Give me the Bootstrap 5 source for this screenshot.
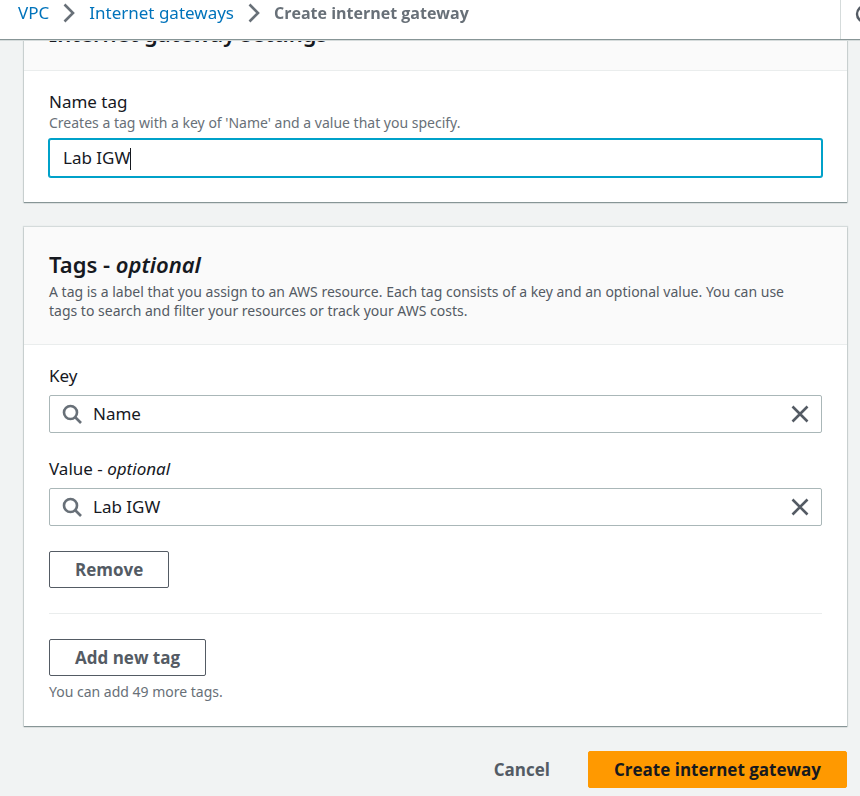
<!DOCTYPE html>
<html lang="en">
<head>
<meta charset="utf-8">
<meta name="viewport" content="width=device-width, initial-scale=1">
<title>Create internet gateway</title>
<link href="https://cdn.jsdelivr.net/npm/bootstrap@5.3.0/dist/css/bootstrap.min.css" rel="stylesheet">
<style>
  body { background: #f1f3f3; color: #16191f; font: 17px/22px "Noto Sans", "Open Sans", sans-serif; }
  a { color: #0073bb; }
  .topbar { height: 40px; background: #fff; border-bottom: 1px solid #879596; box-shadow: 0 1px 0 #d5dbdb; overflow: hidden; }
  .crumbs { padding: 0 0 13px 18px; gap: 13px; }
  .crumbs svg { display: block; }
  .crumb-now, .btn, h2 { font-family: "Open Sans", "Noto Sans", sans-serif; }
  .crumb-now { color: #687078; font-weight: 700; font-size: 16px; }
  .info-btn { flex: 0 0 20px; border: 0; border-left: 1px solid #d5dbdb; background: none; padding: 0 0 12px 14px; overflow: hidden; }
  .page-main { padding: 0 13px 8px 24px; }
  .panel { background: #fff; box-shadow: 0 1px 1px #879596, 0 0 1px 1px #d5dbdb; margin-bottom: 25px; }
  .panel-head { background: #fafafa; border-bottom: 1px solid #eaeded; padding: 24px 32px 24px 25px; }
  .panel-head-short { padding-top: 20px; }
  .panel-body { padding: 20px 25px 25px; }
  h2 { font-size: 22px; line-height: 26px; font-weight: 700; margin: 0; }
  .panel h2 { font-family: "Noto Sans", sans-serif; font-weight: 600; }
  .hint { font-size: 14px; line-height: 19px; color: #687078; }
  .hint-above { margin-bottom: 7px; }
  .hint-below { margin-top: 6px; }
  .panel-head .hint { color: #545b64; margin-top: 5px; }
  label { display: block; }
  .field { height: 38px; border: 1px solid #aab7b8; border-radius: 2px; background: #fff; font-size: 17px; color: #16191f; }
  .field input { font-size: 17px; line-height: 22px; color: #16191f; border: 0; outline: 0; background: none; min-width: 0; padding: 0; }
  .field-active { border-color: #00a1c9; box-shadow: 0 0 0 1px #00a1c9; padding: 0 13px; }
  .caret { left: 80px; top: 8px; width: 1px; height: 22px; background: #16191f; }
  .search { padding: 0 12px; gap: 11px; margin-bottom: 25px; }
  .plain-btn { border: 0; background: none; padding: 0; display: flex; }
  .btn { --bs-btn-font-size: 17px; --bs-btn-font-weight: 700; --bs-btn-line-height: 22px; --bs-btn-border-radius: 2px; --bs-btn-color: #545b64; padding: 6px 25px; height: 37px; }
  .btn-line { --bs-btn-border-color: #545b64; background: #fff; }
  .btn-main { --bs-btn-color: #16191f; --bs-btn-bg: #ff9900; --bs-btn-border-color: #ff9900; }
  .actions { gap: 12px; }
  hr { margin: 25px 0; opacity: 1; border-top-color: #eaeded; }
</style>
<script src="https://cdn.jsdelivr.net/npm/bootstrap@5.3.0/dist/js/bootstrap.bundle.min.js"></script>
</head>
<body>
<header class="topbar fixed-top d-flex">
  <nav class="crumbs d-flex align-items-center flex-grow-1" aria-label="Breadcrumb">
    <a class="text-decoration-none" href="#">VPC</a>
    <svg width="14" height="20" viewBox="0 0 14 20" fill="none" stroke="#687078" stroke-width="2.6" aria-hidden="true"><path d="M2.500 1.500l8.500 8.500L2.500 18.500"/></svg>
    <a class="text-decoration-none" href="#">Internet gateways</a>
    <svg width="14" height="20" viewBox="0 0 14 20" fill="none" stroke="#687078" stroke-width="2.6" aria-hidden="true"><path d="M2.500 1.500l8.500 8.500L2.500 18.500"/></svg>
    <span class="crumb-now" aria-current="page">Create internet gateway</span>
  </nav>
  <button class="info-btn d-flex align-items-center" type="button" aria-label="Info">
    <svg class="flex-shrink-0" width="20" height="20" viewBox="0 0 20 20" fill="none" stroke="#545b64" stroke-width="2.4" aria-hidden="true"><circle cx="10" cy="10" r="8"/><path d="M10 9v5M10 5v2"/></svg>
  </button>
</header>

<main class="page-main">
  <section class="panel">
    <div class="panel-head panel-head-short"><h2>Internet gateway settings</h2></div>
    <div class="panel-body">
      <label for="nameTag">Name tag</label>
      <div class="hint hint-above" id="nameHint">Creates a tag with a key of 'Name' and a value that you specify.</div>
      <div class="field field-active d-flex position-relative">
        <input class="flex-grow-1" id="nameTag" type="text" value="Lab IGW" aria-describedby="nameHint">
        <span class="caret position-absolute"></span>
      </div>
    </div>
  </section>

  <section class="panel">
    <div class="panel-head">
      <h2>Tags - <em>optional</em></h2>
      <div class="hint">A tag is a label that you assign to an AWS resource. Each tag consists of a key and an optional value. You can use tags to search and filter your resources or track your AWS costs.</div>
    </div>
    <div class="panel-body">
      <label class="mb-2" for="tagKey">Key</label>
      <div class="field search d-flex align-items-center">
        <svg width="20" height="20" viewBox="0 0 20 20" fill="none" stroke="#687078" stroke-width="2.6" aria-hidden="true"><circle cx="8.500" cy="8.500" r="6.500"/><path d="M13 13l6 6"/></svg>
        <input class="flex-grow-1" id="tagKey" type="text" value="Name">
        <button class="plain-btn" type="button" aria-label="Clear key"><svg width="18" height="18" viewBox="0 0 18 18" stroke="#545b64" stroke-width="2.6" aria-hidden="true"><path d="M1.500 1.500l15 15M16.500 1.500l-15 15"/></svg></button>
      </div>
      <label class="mb-2" for="tagValue">Value - <em>optional</em></label>
      <div class="field search d-flex align-items-center">
        <svg width="20" height="20" viewBox="0 0 20 20" fill="none" stroke="#687078" stroke-width="2.6" aria-hidden="true"><circle cx="8.500" cy="8.500" r="6.500"/><path d="M13 13l6 6"/></svg>
        <input class="flex-grow-1" id="tagValue" type="text" value="Lab IGW">
        <button class="plain-btn" type="button" aria-label="Clear value"><svg width="18" height="18" viewBox="0 0 18 18" stroke="#545b64" stroke-width="2.6" aria-hidden="true"><path d="M1.500 1.500l15 15M16.500 1.500l-15 15"/></svg></button>
      </div>
      <button class="btn btn-line" type="button">Remove</button>
      <hr>
      <button class="btn btn-line" type="button">Add new tag</button>
      <div class="hint hint-below">You can add 49 more tags.</div>
    </div>
  </section>

  <div class="actions d-flex justify-content-end">
    <button class="btn" type="button">Cancel</button>
    <button class="btn btn-main" type="button">Create internet gateway</button>
  </div>
</main>
</body>
</html>
